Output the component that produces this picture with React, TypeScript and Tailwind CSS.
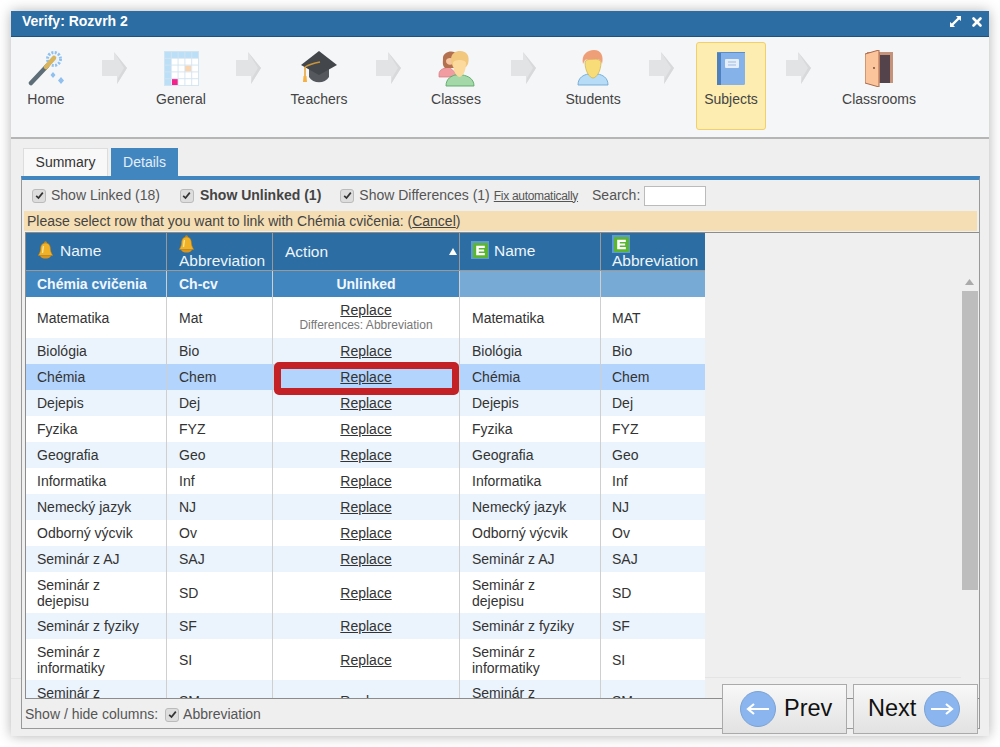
import { X } from 'lucide-react';
import type { ReactNode } from 'react';

const font = { fontFamily: '"Liberation Sans", Arial, sans-serif' };

function Wand() {
  return (
    <svg width="36" height="36" viewBox="0 0 36 36">
      <circle cx="26" cy="9" r="6.5" fill="none" stroke="#8fc0f0" strokeWidth="3" strokeDasharray="2 1.4" />
      <circle cx="26" cy="9" r="4" fill="#e6f1fb" />
      <path d="M3 33 L19 16" stroke="#5e6e78" strokeWidth="4.5" strokeLinecap="round" />
      <path d="M18 17 L26 8" stroke="#d8b45c" strokeWidth="4.5" strokeLinecap="round" />
      <path d="M25 22 l2.5 3 -2.5 3 -2.5 -3z M33 27 l3 3.5 -3 3.5 -3 -3.5z" fill="#8fc0f0" />
    </svg>
  );
}

function CalendarIcon() {
  const lines = [0, 1, 2, 3, 4, 5];
  return (
    <svg width="35" height="35" viewBox="0 0 35 35">
      <rect x="0" y="0" width="35" height="35" fill="#ffffff" />
      <rect x="0" y="0" width="35" height="7" fill="#bcdff8" />
      <rect x="0" y="0" width="7" height="35" fill="#bcdff8" />
      <rect x="21" y="14.5" width="6" height="6" fill="#fbd5b0" />
      <rect x="8" y="28" width="6" height="6" fill="#f6218a" />
      {lines.map((n) => (
        <g key={n}>
          <path d={`M${n * 6.8 + 0.5} 0V35`} stroke="#d3e4f1" strokeWidth="0.9" />
          <path d={`M0 ${n * 6.8 + 0.5}H35`} stroke="#d3e4f1" strokeWidth="0.9" />
        </g>
      ))}
    </svg>
  );
}

function Cap() {
  return (
    <svg width="38" height="34" viewBox="0 0 38 34">
      <path d="M9 15 V26 C13 33 25 33 29 26 V15z" fill="#55595e" />
      <path d="M19 0 L37 14 L19 24 L1 14z" fill="#43474c" />
      <path d="M5 16 C10 13 15 12 20 11" stroke="#c9953c" strokeWidth="1.4" fill="none" />
      <path d="M5 16 V25" stroke="#e8a53c" strokeWidth="1.6" />
      <path d="M3.5 25 h3 l0.5 6 h-4z" fill="#f5b042" />
    </svg>
  );
}

function People() {
  return (
    <svg width="38" height="37" viewBox="0 0 38 37">
      <path d="M2 24 C2 19 8 18 12 17 L20 24 V27 H2z" fill="#f09ca0" stroke="#d97a80" strokeWidth="0.7" />
      <path d="M6 8 C6 1 18 -1 20 5 L19 18 H8 C5 15 6 12 6 8z" fill="#b4714f" />
      <path d="M9 11 C9 7 17 7 17 11 C17 16 9 16 9 11z" fill="#f6c6a0" />
      <path d="M9 36 C9 28 15 26 18 25 H26 C30 26 37 28 37 36z" fill="#a4d8a8" stroke="#58a866" strokeWidth="0.9" />
      <path d="M14 12 C13 3 19 1 23 1 C30 1 33 6 31 14 L29 17 H16z" fill="#f2c77e" />
      <path d="M16 13 C16 9 29 9 29 13 C29 22 25 27 22.5 27 C20 27 16 22 16 13z" fill="#fcd99c" />
    </svg>
  );
}

function Student() {
  return (
    <svg width="32" height="36" viewBox="0 0 32 36">
      <path d="M1 35 C1 27 7 25 11 24 H21 C25 25 31 27 31 35z" fill="#b6dcf7" stroke="#6fa8d4" strokeWidth="0.9" />
      <path d="M8 12 C8 8 24 8 24 12 C24 22 19 28 16 28 C13 28 8 22 8 12z" fill="#f7dc78" stroke="#c9b04f" strokeWidth="0.7" />
      <path d="M6 14 C4 5 10 0 17 0 C24 0 27 6 25 14 C24 10 22 9 19 9 C14 10 9 9 8 10z" fill="#ef9f77" />
    </svg>
  );
}

function Book() {
  return (
    <svg width="28" height="33" viewBox="0 0 28 33">
      <rect x="0" y="0" width="28" height="33" rx="1.5" fill="#86b2ea" />
      <rect x="0" y="0" width="4" height="33" fill="#4d80bf" />
      <rect x="0" y="0" width="28" height="1" fill="#5d8ec9" />
      <rect x="8" y="7" width="14" height="9" rx="1" fill="#e6eef9" />
      <path d="M11 10H19M11 13H19" stroke="#9dbbe2" strokeWidth="1" />
    </svg>
  );
}

function Door() {
  return (
    <svg width="28" height="37" viewBox="0 0 28 37">
      <rect x="2" y="2" width="26" height="31" fill="#c4937a" />
      <rect x="15" y="5" width="10" height="28" fill="#54434a" />
      <path d="M0 4 L14 0 V37 L0 33z" fill="#fcc49a" stroke="#a8694c" strokeWidth="1" />
      <circle cx="9" cy="18" r="0.9" fill="#6b4030" />
    </svg>
  );
}

function StepArrow() {
  return (
    <svg width="26" height="34" viewBox="0 0 26 34">
      <path d="M0 9 H12 V1 L25 17 L15 33 V25 H0z" fill="#e2e3e4" />
      <path d="M12 1 L25 17 L15 33 L16 27 L22 17z" fill="#d8d9db" />
    </svg>
  );
}

function Bell({ className }: { className?: string }) {
  return (
    <svg width="15" height="18" viewBox="0 0 15 18" className={className}>
      <circle cx="7.5" cy="1.8" r="1.5" fill="#c98a16" />
      <path d="M7.5 2 C11.5 2 12.3 5 12.5 8.5 C12.7 11.5 14 13 14.7 14.5 H0.3 C1 13 2.3 11.5 2.5 8.5 C2.7 5 3.5 2 7.5 2z" fill="#f0b127" stroke="#b97c12" strokeWidth="0.6" />
      <path d="M2 14.5 H13 C12.5 17 9.5 17.6 7.5 17.6 C5.5 17.6 2.5 17 2 14.5z" fill="#d8941c" />
      <path d="M5.5 5 C5 7 5 9 4.5 12" stroke="#fde79a" strokeWidth="1.3" fill="none" />
    </svg>
  );
}

function EIcon() {
  return (
    <span className="flex h-[18px] w-[18px] shrink-0 items-center justify-center bg-[#5b9ad2]">
      <svg width="15" height="15" viewBox="0 0 14 14">
        <rect width="14" height="14" fill="#5cb531" />
        <path d="M3 2.5H11V4.6H5.4V6H10.4V8H5.4V9.4H11V11.5H3z" fill="#ffffff" />
      </svg>
    </span>
  );
}

function CheckBox() {
  return (
    <span className="flex h-[14px] w-[14px] shrink-0 items-center justify-center rounded-[3px] border border-[#bbbbbb] bg-[#dddddd]">
      <svg width="9" height="9" viewBox="0 0 9 9">
        <path d="M1.2 4.8 L3.5 7 L7.8 1.6" fill="none" stroke="#333333" strokeWidth="1.7" />
      </svg>
    </span>
  );
}

function CircleArrow({ left }: { left?: boolean }) {
  return (
    <span className="flex h-[36px] w-[36px] shrink-0 items-center justify-center rounded-full border border-[#7aa3d4] bg-[#8ab5ee]">
      <svg width="24" height="14" viewBox="0 0 24 14" className={left ? 'rotate-180' : ''}>
        <path d="M1 7H22M16 2 L22 7 L16 12" fill="none" stroke="#ffffff" strokeWidth="2.2" />
      </svg>
    </span>
  );
}

const steps: { label: string; icon: ReactNode; item: string; arrow?: string; active?: boolean }[] = [
  { label: 'Home', icon: <Wand />, item: 'w-[58px]', arrow: 'w-[79px]' },
  { label: 'General', icon: <CalendarIcon />, item: 'w-[54px]', arrow: 'w-[82px]' },
  { label: 'Teachers', icon: <Cap />, item: 'w-[58px]', arrow: 'w-[82px]' },
  { label: 'Classes', icon: <People />, item: 'w-[52px]', arrow: 'w-[84px]' },
  { label: 'Students', icon: <Student />, item: 'w-[54px]', arrow: 'w-[76px] pl-[8px]' },
  { label: 'Subjects', icon: <Book />, item: 'w-[70px]', arrow: 'w-[66px]', active: true },
  { label: 'Classrooms', icon: <Door />, item: 'w-[94px]' },
];

const rows: { name: string; abbr: string; eAbbr?: string; tall?: boolean; diff?: boolean; picked?: boolean }[] = [
  { name: 'Matematika', abbr: 'Mat', eAbbr: 'MAT', tall: true, diff: true },
  { name: 'Biológia', abbr: 'Bio' },
  { name: 'Chémia', abbr: 'Chem', picked: true },
  { name: 'Dejepis', abbr: 'Dej' },
  { name: 'Fyzika', abbr: 'FYZ' },
  { name: 'Geografia', abbr: 'Geo' },
  { name: 'Informatika', abbr: 'Inf' },
  { name: 'Nemecký jazyk', abbr: 'NJ' },
  { name: 'Odborný výcvik', abbr: 'Ov' },
  { name: 'Seminár z AJ', abbr: 'SAJ' },
  { name: 'Seminár z dejepisu', abbr: 'SD', tall: true },
  { name: 'Seminár z fyziky', abbr: 'SF' },
  { name: 'Seminár z informatiky', abbr: 'SI', tall: true },
  { name: 'Seminár z matematiky', abbr: 'SM', tall: true },
];

function Row({ row, index }: { row: (typeof rows)[number]; index: number }) {
  const bg = row.picked ? 'bg-[#b3d4fc]' : index % 2 === 0 ? 'bg-white' : 'bg-[#ebf4fc]';
  const cell = 'border-r border-[#cfcfcf] px-[12px] py-0 align-middle leading-[16px]';
  return (
    <tr className={`${row.tall ? 'h-[41px]' : 'h-[26px]'} ${bg} text-[14px] text-[#333333]`}>
      <td className={`${cell} pl-[11px]`}>{row.name}</td>
      <td className={cell}>{row.abbr}</td>
      <td className={`${cell} relative text-center`}>
        <span className="underline">Replace</span>
        {row.diff && <div className="text-[12px] leading-[15px] text-[#777777]">Differences: Abbreviation</div>}
        {row.picked && (
          <div className="absolute -top-[2px] -bottom-[5px] left-[1px] right-0 rounded-[5px] border-[7px] border-[#c42126]" />
        )}
      </td>
      <td className={cell}>{row.name}</td>
      <td className={`${cell} border-r-0 pl-[11px]`}>{row.eAbbr ?? row.abbr}</td>
    </tr>
  );
}

export default function App() {
  return (
    <div className="h-[747px] w-[1000px] overflow-hidden bg-white pl-[11px] pt-[11px]" style={font}>
      <div className="relative flex h-[725px] w-[978px] flex-col bg-[#efefef] shadow-[0_0_12px_rgba(0,0,0,0.3)]">
        <div className="flex h-[26px] items-center justify-between border-b border-[#1d5280] bg-[#2c6da3] pl-[11px] pr-[5px] text-[14px] font-bold text-white">
          <span className="-mt-[4px]">Verify: Rozvrh 2</span>
          <div className="-mt-[4px] flex items-center gap-[9px]">
            <svg width="11" height="11" viewBox="0 0 11 11">
              <path d="M6 0H11V5L9.2 3.4 3.4 9.2 5 11H0V6L1.8 7.6 7.6 1.8z" fill="#ffffff" />
            </svg>
            <X className="h-[14px] w-[14px]" strokeWidth={4.5} />
          </div>
        </div>

        <div className="flex h-[102px] border-b-2 border-[#b5b5b5] bg-[#f5f6f8] pl-[6px] pt-[5px] text-[14px] text-[#444444]">
          {steps.map((s) => (
            <div key={s.label} className="flex items-start">
              <div
                className={`${s.item} flex h-[88px] flex-col items-center rounded-[3px] ${
                  s.active ? 'border border-[#f2cf6b] bg-[#fdedb0] pt-[7px]' : 'pt-[8px]'
                }`}
              >
                <div className="flex h-[36px] items-center justify-center">{s.icon}</div>
                <span className="mt-[3px] whitespace-nowrap">{s.label}</span>
              </div>
              {s.arrow && (
                <div className={`${s.arrow} flex justify-center pt-[9px]`}>
                  <StepArrow />
                </div>
              )}
            </div>
          ))}
        </div>

        <div className="flex h-[37px] items-end gap-[3px] pl-[12px] text-[14px]">
          <div className="flex h-[28px] w-[85px] items-center justify-center border border-b-0 border-[#dddddd] bg-[#f8f8f8] text-[#333333]">
            Summary
          </div>
          <div className="flex h-[28px] w-[67px] items-center justify-center bg-[#4286c0] text-[#e3effa]">Details</div>
        </div>

        <div className="absolute left-0 right-0 top-[667px] h-px bg-[#e4e4e4]" />

        <div className="relative ml-[10px] flex h-[553px] w-[959px] flex-col border border-t-[4px] border-[#999999] border-t-[#4286c0] bg-[#efefef] text-[14px] text-[#555555]">
          <div className="flex h-[31px] items-center pl-[10px]">
            <CheckBox />
            <span className="ml-[5px]">Show Linked (18)</span>
            <span className="ml-[20px]">
              <CheckBox />
            </span>
            <span className="ml-[6px] font-bold text-[#444444]">Show Unlinked (1)</span>
            <span className="ml-[19px]">
              <CheckBox />
            </span>
            <span className="ml-[5px]">Show Differences (1)</span>
            <span className="ml-[4px] text-[12px] tracking-[-0.3px] underline">Fix automatically</span>
            <span className="ml-[14px]">Search:</span>
            <span className="ml-[4px] h-[20px] w-[62px] border border-[#bbbbbb] bg-white" />
          </div>
          <div className="mb-[1px] ml-[2px] mr-[2px] flex h-[20px] items-center bg-[#f5deb3] pl-[3px] text-[#444444]">
            Please select row that you want to link with Chémia cvičenia: (<span className="underline">Cancel</span>)
          </div>

          <div className="ml-[3px] flex h-[467px] border-b border-t border-[#8c8c8c]">
            <div className="h-full w-[680px] shrink-0 overflow-hidden border-l border-[#8c8c8c]">
              <table className="w-[679px] table-fixed border-separate border-spacing-0">
                <colgroup>
                  <col className="w-[141px]" />
                  <col className="w-[106px]" />
                  <col className="w-[187px]" />
                  <col className="w-[141px]" />
                  <col className="w-[104px]" />
                </colgroup>
                <thead>
                  <tr className="h-[38px] bg-[#2c6da3] text-left text-[15.5px] font-normal leading-[15px] text-[#eef5fb]">
                    <th className="border-b border-r border-[#999999] pl-[12px] font-normal">
                      <span className="-mt-[3px] flex items-center gap-[7px]">
                        <Bell />
                        Name
                      </span>
                    </th>
                    <th className="border-b border-r border-[#999999] pl-[12px] font-normal">
                      <Bell className="-mt-[1px] block" />
                      <span className="block">Abbreviation</span>
                    </th>
                    <th className="border-b border-r border-[#999999] pl-[12px] font-normal">
                      <span className="-mt-[1px] flex items-center justify-between pr-[2px]">
                        Action
                        <svg width="8" height="7" viewBox="0 0 8 7">
                          <path d="M4 0L8 7H0z" fill="#ffffff" />
                        </svg>
                      </span>
                    </th>
                    <th className="border-b border-r border-[#999999] pl-[11px] font-normal">
                      <span className="-mt-[3px] flex items-center gap-[5px]">
                        <EIcon />
                        Name
                      </span>
                    </th>
                    <th className="border-b border-[#999999] pl-[11px] font-normal">
                      <EIcon />
                      <span className="block">Abbreviation</span>
                    </th>
                  </tr>
                </thead>
                <tbody>
                  <tr className="h-[26px] bg-[#4286c0] text-[14px] font-bold text-[#f2f7fc]">
                    <td className="border-r border-[#cfcfcf] pl-[11px] pr-[12px]">Chémia cvičenia</td>
                    <td className="border-r border-[#cfcfcf] px-[12px]">Ch-cv</td>
                    <td className="border-r border-[#cfcfcf] px-[12px] text-center">Unlinked</td>
                    <td className="border-r border-[#cfcfcf] bg-[#78aad6]" />
                    <td className="bg-[#78aad6]" />
                  </tr>
                  {rows.map((row, i) => (
                    <Row key={row.name} row={row} index={i} />
                  ))}
                </tbody>
              </table>
            </div>
            <div className="flex h-full flex-1">
              <div className="h-[445px] flex-1 border-b border-[#e4e4e4]" />
              <div className="flex h-[445px] w-[17px] flex-col items-center pt-[46px]">
                <svg width="9" height="6" viewBox="0 0 9 6">
                  <path d="M4.5 0L9 6H0z" fill="#aaaaaa" />
                </svg>
                <div className="mt-[6px] h-[299px] w-[16px] bg-[#bdbdbd]" />
              </div>
              <div className="w-[1px]" />
            </div>
          </div>

          <div className="flex flex-1 items-center pl-[3px] pt-[2px] text-[#555555]">
            Show / hide columns:
            <span className="ml-[7px]">
              <CheckBox />
            </span>
            <span className="ml-[4px]">Abbreviation</span>
          </div>
        </div>

        <div className="absolute bottom-[2px] right-[11px] flex gap-[6px] text-[23.5px] text-[#111111]">
          <button className="flex h-[50px] w-[125px] items-center gap-[8px] border border-[#aaaaaa] bg-gradient-to-b from-[#f8f8f8] to-[#e2e2e2] pl-[17px]">
            <CircleArrow left />
            Prev
          </button>
          <button className="flex h-[50px] w-[125px] items-center gap-[8px] border border-[#aaaaaa] bg-gradient-to-b from-[#f8f8f8] to-[#e2e2e2] pl-[14px]">
            Next
            <CircleArrow />
          </button>
        </div>
      </div>
    </div>
  );
}
